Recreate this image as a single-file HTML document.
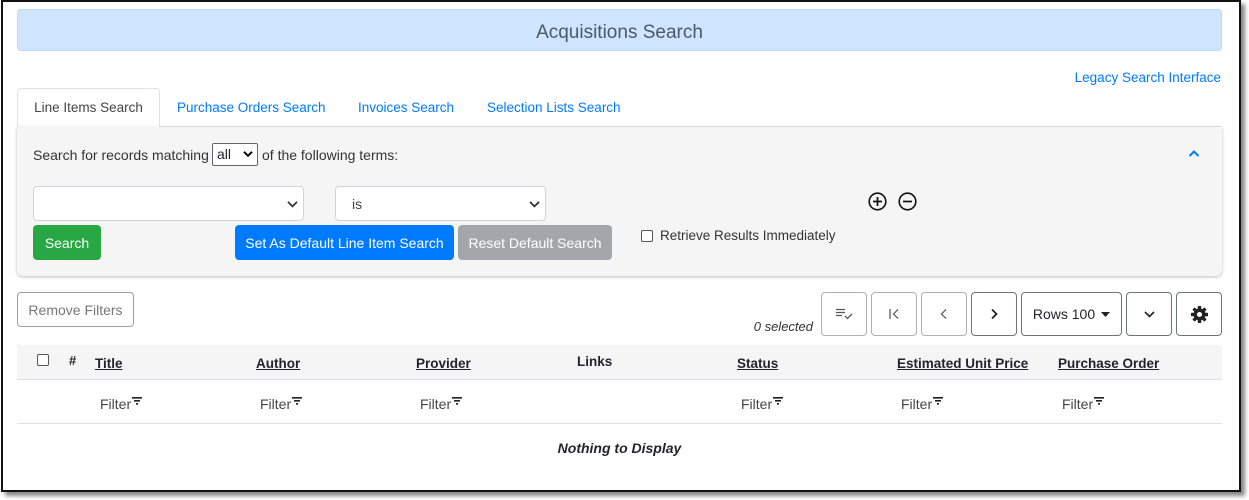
<!DOCTYPE html>
<html><head><style>
*{box-sizing:border-box;margin:0;padding:0}
body{width:1249px;height:500px;background:#fff;font-family:"Liberation Sans",sans-serif;font-size:14px;color:#212529;position:relative;overflow:hidden}
.frame{position:absolute;left:1px;top:0;width:1240px;height:492px;border:2px solid #111;box-shadow:4px 4px 4px #888;background:#fff}
.a{position:absolute}
.btn{position:absolute;border-radius:4px;font-size:14px;display:flex;align-items:center;justify-content:center}
.sel{position:absolute;background:#fff;border:1px solid #ced4da;border-radius:4px}
.chev{position:absolute;right:6px;top:50%;transform:translateY(-60%)}
.pb{position:absolute;top:292px;height:44px;border:1px solid #6c757d;border-radius:4px;background:#fff;display:flex;align-items:center;justify-content:center;color:#212529}
.pb.d{border-color:#adb1b5;color:#8a8f94}
.th{position:absolute;top:356px;font-weight:bold;text-decoration:underline;font-size:13.5px}
.f{position:absolute;top:396px;font-size:14px;color:#444}
.tab{position:absolute;top:100px;color:#007bff;font-size:13.5px}
</style></head><body>
<div class="frame"></div>
<div class="a" style="left:17px;top:9px;width:1205px;height:42px;background:#cfe5fd;border:1px solid #b8daff;border-radius:4px;text-align:center;line-height:46px;font-size:19px;color:#4a5868">Acquisitions Search</div>
<div class="a" style="right:28px;top:70px;color:#007bff;font-size:13.5px">Legacy Search Interface</div>
<div class="a" style="left:17px;top:126px;width:1205px;height:1px;background:#dee2e6"></div>
<div class="a" style="left:17px;top:88px;width:143px;height:40px;border:1px solid #dee2e6;border-bottom:none;border-radius:4px 4px 0 0;background:#fff;text-align:center;line-height:38px;color:#444;font-size:13.5px">Line Items Search</div>
<div class="tab" style="left:177px">Purchase Orders Search</div>
<div class="tab" style="left:358px">Invoices Search</div>
<div class="tab" style="left:487px">Selection Lists Search</div>
<div class="a" style="left:17px;top:127px;width:1205px;height:149px;background:#f5f5f5;border-radius:0 0 6px 6px;box-shadow:0 1px 3px #bbb"></div>
<div class="a" style="left:33px;top:147px;color:#333">Search for records matching</div>
<div class="sel" style="left:212px;top:143px;width:46px;height:23px;border-color:#666;border-radius:2px;padding-left:4px;line-height:21px">all<svg class="chev" style="right:4px" width="10" height="7" viewBox="0 0 10 7"><path d="M1 1l4 4 4-4" stroke="#000" stroke-width="2" fill="none"/></svg></div>
<div class="a" style="left:262px;top:147px;color:#333">of the following terms:</div>
<svg class="a" style="left:1188px;top:149px" width="12" height="9" viewBox="0 0 12 9"><path d="M1.5 7l4.5-4.5 4.5 4.5" stroke="#007bff" stroke-width="2" fill="none"/></svg>
<div class="sel" style="left:33px;top:186px;width:271px;height:35px"><svg class="chev" style="right:5px;transform:translateY(-45%)" width="11" height="7" viewBox="0 0 11 7"><path d="M1 1l4.5 4.5 4.5-4.5" stroke="#333" stroke-width="1.8" fill="none"/></svg></div>
<div class="sel" style="left:335px;top:186px;width:211px;height:35px;padding-left:16px;line-height:35px;color:#444">is<svg class="chev" style="right:5px;transform:translateY(-45%)" width="11" height="7" viewBox="0 0 11 7"><path d="M1 1l4.5 4.5 4.5-4.5" stroke="#333" stroke-width="1.8" fill="none"/></svg></div>
<svg class="a" style="left:868px;top:192px" width="19" height="19" viewBox="0 0 19 19"><circle cx="9.5" cy="9.5" r="8.3" stroke="#111" stroke-width="1.6" fill="none"/><path d="M9.5 5v9M5 9.5h9" stroke="#111" stroke-width="1.7"/></svg>
<svg class="a" style="left:898px;top:192px" width="19" height="19" viewBox="0 0 19 19"><circle cx="9.5" cy="9.5" r="8.3" stroke="#111" stroke-width="1.6" fill="none"/><path d="M5 9.5h9" stroke="#111" stroke-width="1.7"/></svg>
<div class="btn" style="left:33px;top:225px;width:68px;height:35px;background:#28a745;color:#fff">Search</div>
<div class="btn" style="left:235px;top:225px;width:219px;height:35px;background:#007bff;color:#fff">Set As Default Line Item Search</div>
<div class="btn" style="left:458px;top:225px;width:154px;height:35px;background:#a3a7ab;color:#fff">Reset Default Search</div>
<div class="a" style="left:641px;top:230px;width:12px;height:12px;border:1px solid #555;border-radius:2px;background:#fff"></div>
<div class="a" style="left:660px;top:228px;color:#333;font-size:13.5px">Retrieve Results Immediately</div>
<div class="btn" style="left:17px;top:292px;width:117px;height:35px;border:1px solid #9aa0a6;color:#777;background:#fff">Remove Filters</div>
<div class="a" style="right:436px;top:319px;font-style:italic;font-size:13px;color:#333">0 selected</div>
<div class="pb d" style="left:821px;width:46px"><svg width="18" height="12" viewBox="0 0 18 12"><path d="M1 1.5h9M1 4.5h9M1 7.5h6" stroke="#555" stroke-width="1.3"/><path d="M10 8l2.5 2.5L17 6" stroke="#555" stroke-width="1.3" fill="none"/></svg></div>
<div class="pb d" style="left:871px;width:46px"><svg width="12" height="12" viewBox="0 0 12 12"><path d="M2 1v10M10 1.5L5.5 6 10 10.5" stroke="#666" stroke-width="1.4" fill="none"/></svg></div>
<div class="pb d" style="left:921px;width:46px"><svg width="8" height="12" viewBox="0 0 8 12"><path d="M6 1.5L1.5 6 6 10.5" stroke="#666" stroke-width="1.4" fill="none"/></svg></div>
<div class="pb" style="left:971px;width:46px"><svg width="8" height="12" viewBox="0 0 8 12"><path d="M2 1.5L6.5 6 2 10.5" stroke="#222" stroke-width="1.8" fill="none"/></svg></div>
<div class="pb" style="left:1021px;width:101px;font-size:14px">Rows 100 <svg style="margin-left:6px" width="9" height="5" viewBox="0 0 9 5"><path d="M0 0h9L4.5 5z" fill="#222"/></svg></div>
<div class="pb" style="left:1126px;width:46px"><svg width="11" height="7" viewBox="0 0 11 7"><path d="M1 1l4.5 4.5 4.5-4.5" stroke="#222" stroke-width="1.6" fill="none"/></svg></div>
<div class="pb" style="left:1176px;width:46px"><svg width="17" height="17" viewBox="-8 -8 16 16"><circle r="5.6" fill="#222"/><g fill="#222"><rect x="-1.6" y="-8" width="3.2" height="16" rx=".6"/><rect x="-1.6" y="-8" width="3.2" height="16" rx=".6" transform="rotate(45)"/><rect x="-1.6" y="-8" width="3.2" height="16" rx=".6" transform="rotate(90)"/><rect x="-1.6" y="-8" width="3.2" height="16" rx=".6" transform="rotate(135)"/></g><circle r="2.4" fill="#fff"/></svg></div>
<div class="a" style="left:17px;top:345px;width:1205px;height:35px;background:#f5f5f5;border-bottom:1px solid #dee2e6"></div>
<div class="a" style="left:37px;top:354px;width:12px;height:12px;border:1px solid #555;border-radius:2px;background:#fff"></div>
<div class="a" style="left:69px;top:353px;font-weight:bold;font-size:13px">#</div>
<div class="th" style="left:95px">Title</div>
<div class="th" style="left:256px">Author</div>
<div class="th" style="left:416px">Provider</div>
<div class="th" style="left:577px;top:354px;text-decoration:none">Links</div>
<div class="th" style="left:737px">Status</div>
<div class="th" style="left:897px">Estimated Unit Price</div>
<div class="th" style="left:1058px">Purchase Order</div>
<div class="a" style="left:17px;top:423px;width:1205px;height:1px;background:#dee2e6"></div>
<div class="f" style="left:100px">Filter</div><div class="f" style="left:260px">Filter</div><div class="f" style="left:420px">Filter</div><div class="f" style="left:741px">Filter</div><div class="f" style="left:901px">Filter</div><div class="f" style="left:1062px">Filter</div>
<svg class="a" style="left:132px;top:397px" width="10" height="8"><path d="M0 0h10v1.6H0zM2 3h6v1.6H2zM4 6h2v1.6H4z" fill="#222"/></svg>
<svg class="a" style="left:292px;top:397px" width="10" height="8"><path d="M0 0h10v1.6H0zM2 3h6v1.6H2zM4 6h2v1.6H4z" fill="#222"/></svg>
<svg class="a" style="left:452px;top:397px" width="10" height="8"><path d="M0 0h10v1.6H0zM2 3h6v1.6H2zM4 6h2v1.6H4z" fill="#222"/></svg>
<svg class="a" style="left:773px;top:397px" width="10" height="8"><path d="M0 0h10v1.6H0zM2 3h6v1.6H2zM4 6h2v1.6H4z" fill="#222"/></svg>
<svg class="a" style="left:933px;top:397px" width="10" height="8"><path d="M0 0h10v1.6H0zM2 3h6v1.6H2zM4 6h2v1.6H4z" fill="#222"/></svg>
<svg class="a" style="left:1094px;top:397px" width="10" height="8"><path d="M0 0h10v1.6H0zM2 3h6v1.6H2zM4 6h2v1.6H4z" fill="#222"/></svg>
<div class="a" style="left:17px;top:440px;width:1205px;text-align:center;font-weight:bold;font-style:italic;font-size:14px">Nothing to Display</div>
</body></html>
